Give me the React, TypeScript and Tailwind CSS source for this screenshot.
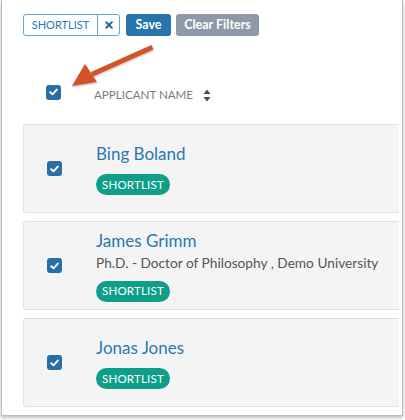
import React from "react";

const font = { fontFamily: "Lato, 'Open Sans', Arial, sans-serif" };

function Check() {
  return (
    <div className="w-[15px] h-[15px] rounded-[3px] bg-[#2a6ea6] flex items-center justify-center shrink-0">
      <svg width="9" height="8" viewBox="0 0 9 8">
        <path d="M1.2 4.2 L3.5 6.3 L7.8 1.6" fill="none" stroke="white" strokeWidth="1.9" strokeLinecap="round" strokeLinejoin="round" />
      </svg>
    </div>
  );
}

function Badge() {
  return (
    <div className="inline-flex items-center justify-center h-[21px] w-[74px] rounded-full bg-[#0f9f89] text-white text-[11.5px] tracking-[0.2px]">
      SHORTLIST
    </div>
  );
}

function Card({ name, sub }: { name: string; sub?: string }) {
  return (
    <div className="h-[89px] bg-[#f4f4f4] border border-r-0 border-[#e1e1e1] rounded-l-[3px] flex items-center pl-[23px]">
      <Check />
      <div className="ml-[34px] flex flex-col items-start">
        <div className="text-[17px] leading-[24px] text-[#2a77b1]">{name}</div>
        {sub && <div className="text-[13.7px] leading-[18px] text-[#555] mt-[1px]">{sub}</div>}
        <div className="mt-[5px]">
          <Badge />
        </div>
      </div>
    </div>
  );
}

export default function App() {
  return (
    <div className="w-[405px] h-[420px] bg-white pl-[1px] relative" style={font}>
      <div className="w-[402px] h-[416px] border-x border-b border-[#bcbcbc] shadow-[0_2px_3px_rgba(0,0,0,0.25)] overflow-hidden">
        <div className="pl-[21px] pr-[3px] pt-[14px]">
          <div className="flex items-center h-[22px]">
            <div className="flex h-[22px] border border-[#6aa5cf] rounded-[3px] text-[#2a77b1]">
              <div className="w-[74px] flex items-center justify-center text-[11px] border-r border-[#6aa5cf]">SHORTLIST</div>
              <div className="w-[21px] flex items-center justify-center">
                <svg width="8" height="8" viewBox="0 0 8 8">
                  <path d="M1.2 1.2 L6.8 6.8 M6.8 1.2 L1.2 6.8" stroke="#2d6a9c" strokeWidth="2" strokeLinecap="round" />
                </svg>
              </div>
            </div>
            <div className="ml-[6px] w-[45px] h-[22px] rounded-[3px] bg-[#2875ae] text-white text-[12.5px] font-bold flex items-center justify-center">Save</div>
            <div className="ml-[5px] w-[83px] h-[22px] rounded-[3px] bg-[#8e99a7] text-white text-[12.5px] font-bold flex items-center justify-center">Clear Filters</div>
          </div>
          <div className="flex items-center h-[16px] mt-[48px] pl-[23px]">
            <Check />
            <div className="ml-[33px] mt-[6px] text-[11.6px] text-[#7a7a7a]">APPLICANT NAME</div>
            <svg className="ml-[10px] mt-[6px]" width="8" height="13" viewBox="0 0 8 13">
              <path d="M4 0.5 L7.5 5 L0.5 5 Z" fill="#3c4e69" />
              <path d="M4 12.5 L7.5 8 L0.5 8 Z" fill="#3c4e69" />
            </svg>
          </div>
          <div className="mt-[24px] flex flex-col gap-[8px]">
            <Card name="Bing Boland" />
            <Card name="James Grimm" sub="Ph.D. - Doctor of Philosophy , Demo University" />
            <Card name="Jonas Jones" />
          </div>
        </div>
      </div>
      <svg className="absolute left-0 top-0 pointer-events-none" width="405" height="420">
        <defs>
          <filter id="sh" x="-20%" y="-20%" width="140%" height="140%">
            <feDropShadow dx="0" dy="1" stdDeviation="1" floodColor="#000" floodOpacity="0.3" />
          </filter>
        </defs>
        <g filter="url(#sh)" fill="#d4512a">
          <path d="M151.5 45 L153.5 49.5 L93 76.5 L91 72 Z" />
          <path d="M72 86 L85 64 L97 82 Z" />
        </g>
      </svg>
    </div>
  );
}
